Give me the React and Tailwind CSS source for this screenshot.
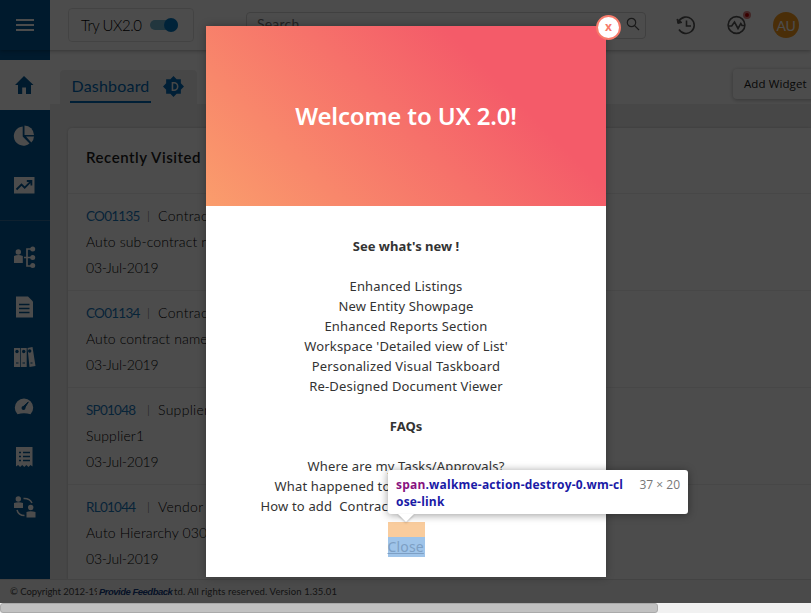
import React from "react";

const MODAL_FONT = "font-['Noto_Sans',sans-serif]";

function Icon({ children, className = "size-6 mr-[2px]" }) {
  return (
    <svg viewBox="0 0 24 24" className={className} fill="currentColor">
      {children}
    </svg>
  );
}

const line = { fill: "none", stroke: "currentColor" };

const HomeIcon = () => (
  <Icon>
    <path d="M12 3 3 12h3V21h4.200V14.500h3.800V21H19v-9h2.500z" />
  </Icon>
);
const PieIcon = () => (
  <Icon>
    <path d="M10.700 3.500V13.500L17.500 20.500A9.600 9.600 0 1 1 10.700 3.500z" />
    <path d="M12.500 2.500A9.800 9.800 0 0 1 22 12H12.500z" />
    <path d="M14 13.500h8a9 9 0 0 1-2.700 6z" />
  </Icon>
);
const TrendIcon = () => (
  <Icon>
    <path d="M2 4h20.500v16.500H2z" />
    <path d="M4.500 16.500 9.500 11.500l3.200 3.200 6-6M14.800 8h4.600v4.500" fill="none" stroke="#005796" strokeWidth="1.800" />
  </Icon>
);
const SupplierIcon = () => (
  <Icon>
    <circle cx="6.300" cy="7" r="2.700" />
    <path d="M2 11q4.500-2 8.800 0v7H2z" />
    <path d="M12 12.500h8M20 4h-5v17h5" {...line} strokeWidth="1.700" />
    <circle cx="20.700" cy="4" r="2.500" />
    <circle cx="20.700" cy="12.500" r="2.500" />
    <circle cx="20.700" cy="20.500" r="2.500" />
  </Icon>
);
const DocumentIcon = () => (
  <Icon>
    <path d="M4 1.500h12l5 5v16H4z" />
    <path d="M7 9.500h10.500M7 13.500h10.500M7 17.500h10.500" stroke="#005796" strokeWidth="1.300" />
  </Icon>
);
const BindersIcon = () => (
  <Icon>
    <path d="M2 3h6v19H2zM8.700 3h6v19h-6zM15.500 3l5-1 3 19-6 1z" />
    <path d="M4 18h2.500M10.500 18H13M18.500 18h2" stroke="#005796" strokeWidth="1" />
    <g fill="#005796"><circle cx="5" cy="6.500" r="1.700" /><circle cx="11.700" cy="6.500" r="1.700" /><circle cx="17.700" cy="6" r="1.700" /></g>
  </Icon>
);
const GaugeIcon = () => (
  <Icon>
    <path d="M5.500 19.200A9.200 9.200 0 1 1 18.500 19.200q-6.500-2-13 0z" />
    <path d="m10.800 12 5.500-5-4 6.500z" fill="#005796" stroke="#005796" strokeWidth="1" />
    <circle cx="11.500" cy="13" r="2" fill="#005796" />
  </Icon>
);
const ReceiptIcon = () => (
  <Icon>
    <path d="M4 2h16.500v19.500l-2-1.500-2 2-2.100-2-2.100 2-2.100-2-2.100 2-2-2-2.100 1.500z" />
    <path d="M7 7.500h2M11 7.500h7M7 11.500h2M11 11.500h7M7 15.500h2M11 15.500h7" stroke="#005796" strokeWidth="1.300" />
  </Icon>
);
const ExchangeIcon = () => (
  <Icon>
    <circle cx="6.300" cy="4" r="2.700" />
    <path d="M2 8q4.500-1.500 9 0v5H2z" />
    <circle cx="18.700" cy="12.500" r="2.700" />
    <path d="M14.500 17q4-1.500 9 0v5.500h-9z" />
    <path d="M11.500 3.500q6-.500 8.500 4.500M5 15q1.500 5.500 7.500 5.500" {...line} strokeWidth="1.500" />
  </Icon>
);

const NAV = [SupplierIcon, DocumentIcon, BindersIcon, GaugeIcon, ReceiptIcon, ExchangeIcon];

const ROWS = [
  ["CO01135", "Contracts", "Auto sub-contract name"],
  ["CO01134", "Contracts", "Auto contract name 03"],
  ["SP01048", "Suppliers", "Supplier1"],
  ["RL01044", "Vendor", "Auto Hierarchy 0307"],
];

function NavItem({ children, active }) {
  return (
    <div className={active ? "flex h-[50px] items-center justify-center bg-white text-[#005796]" : "flex h-[50px] items-center justify-center text-white"}>
      {children}
    </div>
  );
}

function Sidebar() {
  return (
    <nav className="flex w-[50px] shrink-0 flex-col bg-[#005796] pt-2.5">
      <NavItem active><HomeIcon /></NavItem>
      <NavItem><PieIcon /></NavItem>
      <NavItem><TrendIcon /></NavItem>
      <div className="mt-[10px] mb-[11px] h-px shrink-0 bg-[#33709f]" />
      {NAV.map((Glyph, i) => (
        <NavItem key={i}><Glyph /></NavItem>
      ))}
    </nav>
  );
}

function Header() {
  return (
    <header className="relative flex h-[50px] shrink-0 items-center bg-white shadow-[0_1px_4px_rgba(0,0,0,0.3)]">
      <div className="flex h-full w-[50px] items-center justify-center bg-[#005796]">
        <div className="flex w-[18px] flex-col gap-[3px]">
          <i className="h-0.5 bg-white" />
          <i className="h-0.5 bg-white" />
          <i className="h-0.5 bg-white" />
        </div>
      </div>
      <div className="ml-[18px] flex h-[34px] w-[126px] shrink-0 items-center rounded border border-[#e2e2e2] pl-3">
        <span className="w-[69px] text-[15px] font-light tracking-[-0.45px] whitespace-nowrap text-black">Try UX2.0</span>
        <span className="flex h-2.5 w-7 items-center justify-end rounded-full bg-[#72b4d0]">
          <i className="size-3.5 shrink-0 rounded-full bg-[#0077c0]" />
        </span>
      </div>
      <div className="ml-[52px] flex h-[27px] w-[400px] shrink-0 items-center justify-between rounded border border-[#d5d5d5] pr-[5px] pl-2.5 text-[14px] text-[#777]">
        <span className="pb-1 tracking-[0.2px]">Search</span>
        <svg viewBox="0 0 14 14" className="mb-0.5 size-3.5" fill="none" stroke="#555" strokeWidth="1.200">
          <circle cx="5.500" cy="5.500" r="4.200" /><path d="m8.600 8.600 4.400 4.400" />
        </svg>
      </div>
      <svg viewBox="0 0 20 20" className="ml-[30px] size-5 shrink-0" fill="none" stroke="#555" strokeWidth="1.600">
        <path d="M3 6A8.200 8.200 0 1 1 3 14.500M10.500 5.500V11H15" />
        <path d="m1 4 .8 4.500L6 7.500z" fill="#555" strokeWidth="1" />
      </svg>
      <div className="relative ml-[31px] size-5 shrink-0">
        <svg viewBox="0 0 20 20" className="size-5" fill="none" stroke="#555" strokeWidth="1.600">
          <circle cx="9.500" cy="10" r="8.400" /><path d="M1.500 11h3.200l2.800-4 3.500 6.500 2.800-5 1.200 2h3" />
        </svg>
        <i className="absolute -top-1 right-[-4px] size-2 rounded-full border-2 border-[#e08080] bg-[#c00000]" />
      </div>
      <div className="ml-[26px] flex size-[26px] shrink-0 items-center justify-center rounded-full bg-[#f79a1c] text-[14px] tracking-[-0.2px] text-white">AU</div>
    </header>
  );
}

function Dashboard() {
  return (
    <main className="flex min-w-0 grow flex-col overflow-hidden bg-[#efefef]">
      <div className="flex h-[54px] shrink-0 items-end justify-between bg-white">
        <div className="ml-2.5 flex h-[34px] w-[137px] items-start rounded-t bg-[#efefef] pl-2.5">
          <div className="h-[33px] w-[81px] border-b-2 border-[#0068b5] pl-[1.500px] text-[16px] leading-[31px] tracking-[0.2px] text-[#0068b5]">Dashboard</div>
          <svg viewBox="0 0 20 20" className="mt-1.5 ml-3 size-[21px]" fill="#0068b5">
            <path d="M10 0 13 3h4v4l3 3-3 3v4h-4l-3 3-3-3H3v-4l-3-3 3-3V3h4z" />
            <path d="M9 6.500h1.500a3.500 3.500 0 0 1 0 7H9z" fill="none" stroke="#efefef" strokeWidth="1.500" />
          </svg>
        </div>
        <div className="mr-[-10px] mb-[5px] flex h-[30px] w-[88px] items-center rounded bg-white pl-[11px] whitespace-nowrap shadow-[0_1px_4px_rgba(0,0,0,0.3)]">
          <span className="font-['Open_Sans',sans-serif] text-[11.500px] font-medium tracking-[0.1px]">Add Widget</span>
        </div>
      </div>
      <section className="mt-6 ml-[18px] flex grow flex-col rounded-tl bg-white shadow-[0_0_3px_rgba(0,0,0,0.2)]">
        <h2 className="flex h-[65px] shrink-0 items-center pb-1.5 pl-[18px] text-[15px] font-semibold tracking-[0.55px]">Recently Visited</h2>
        {ROWS.map(([code, type, name]) => (
          <div key={code} className="flex h-[97px] shrink-0 flex-col border-t border-[#ededed] pt-[9px] pl-[18px] text-[14px] leading-[26px] font-light whitespace-nowrap text-black">
            <div className="flex h-[26px]">
              <span className="w-[61px] text-[13.500px] font-normal tracking-[-0.75px] text-[#1a78bd]">{code}</span>
              <span className="w-[11px] text-[12px] text-[#555]">|</span>
              <span className="tracking-[0.3px]">{type}</span>
            </div>
            <div className="tracking-[0.12px]">{name}</div>
            <div className="tracking-[-0.2px]">03-Jul-2019</div>
          </div>
        ))}
      </section>
    </main>
  );
}

function Footer() {
  return (
    <footer className="flex h-6 shrink-0 items-center border-t border-[#e2e2e2] bg-[#f7f7f7] pt-0.5 pl-2.5 text-[9.500px] whitespace-nowrap text-[#444]">
      <span className="w-[87px] tracking-[-0.05px]">© Copyright 2012-19</span>
      <b className="relative mr-0.5 w-[75px] bg-[#f7f7f7] pl-[2px] font-['Liberation_Sans',sans-serif] text-[9.500px] tracking-[-0.5px] text-[#153e82] italic">Provide Feedback</b>
      <span className="tracking-[0.12px]">td. All rights reserved. Version 1.35.01</span>
    </footer>
  );
}

function Inspector() {
  return (
    <div className="absolute top-[444px] left-[182px] flex h-11 w-[300px] justify-between rounded-[3px] bg-white px-2 pt-[6px] text-[12px] leading-[17px] shadow-[0_1px_8px_rgba(0,0,0,0.4)] font-['Open_Sans',sans-serif]">
      <div className="font-bold whitespace-nowrap text-[#1a1aa6]">
        <div className="tracking-[0.2px]"><span className="text-[#881280]">span</span>.walkme-action-destroy-0.wm-cl</div>
        <div className="tracking-[0.2px]">ose-link</div>
      </div>
      <div className="whitespace-nowrap text-[#777]">37 × 20</div>
      <svg viewBox="0 0 16 8" className="absolute top-11 left-2.5 h-2 w-4 drop-shadow-[0_1px_1px_rgba(0,0,0,0.25)]" fill="#fff"><path d="M0 0h16L8 8z" /></svg>
    </div>
  );
}

function Welcome() {
  return (
    <div className={`absolute top-[26px] left-[206px] flex h-[551px] w-[400px] flex-col bg-white shadow-[0_0_8px_rgba(0,0,0,0.3)] ${MODAL_FONT}`}>
      <div className="flex h-[180px] items-center justify-center bg-[linear-gradient(45deg,#fa9d6c_0%,#f45b69_72%)] text-[24px] font-semibold tracking-[-0.15px] text-white">
        Welcome to UX 2.0!
      </div>
      <div className="flex flex-col items-center pt-[30px] text-[13px] leading-5 tracking-[0.16px] whitespace-pre text-[#333]">
        <b className="mb-5 tracking-normal">See what's new !</b>
        <p>Enhanced Listings</p>
        <p>New Entity Showpage</p>
        <p>Enhanced Reports Section</p>
        <p>Workspace 'Detailed view of List'</p>
        <p>Personalized Visual Taskboard</p>
        <p>Re-Designed Document Viewer</p>
        <b className="my-5 tracking-normal">FAQs</b>
        <p>Where are my Tasks/Approvals?</p>
        <p className="w-[263px]">What happened to</p>
        <p className="w-[291px]">{"How to add  Contrac"}</p>
        <div className="mt-1.5 h-[15px] w-[37px] bg-[#f9cc9d]" />
        <span className="h-5 w-[37px] bg-[#9fc4e9] text-[14px] text-[#7d9fc4] underline">Close</span>
      </div>
      <div className="absolute top-[-11px] left-[390px] flex size-[25px] items-center justify-center rounded-full border-2 border-[#f77b6b] bg-white pb-0.5 text-[12px] leading-none font-bold text-[#f77b6b]">x</div>
      <Inspector />
    </div>
  );
}

export default function App() {
  return (
    <div className="relative flex h-[613px] w-[811px] flex-col overflow-hidden bg-white font-['Lato',sans-serif] text-[#1b1b1b]">
      <Header />
      <div className="flex h-[529px] shrink-0">
        <Sidebar />
        <Dashboard />
      </div>
      <Footer />
      <div className="flex grow bg-[#f1f1f1]">
        <div className="w-[658px] rounded-[3px] border border-[#aaa] bg-[#c1c1c1]" />
      </div>
      <div className="absolute inset-x-0 top-0 h-[603px] bg-black/70" />
      <Welcome />
    </div>
  );
}
